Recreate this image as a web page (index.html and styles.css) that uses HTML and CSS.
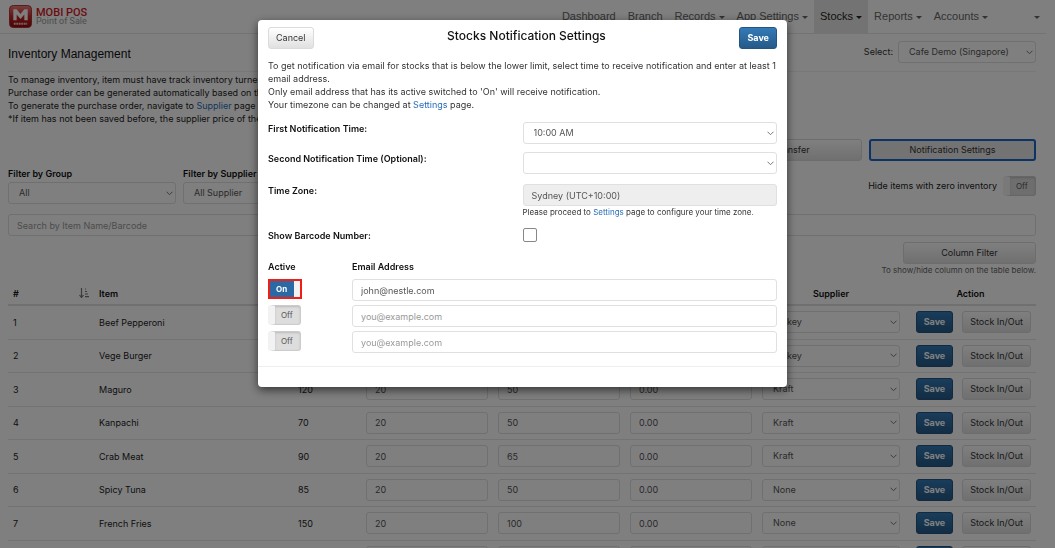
FILE: index.html
```html
<!DOCTYPE html>
<html lang="en">
<head>
<meta charset="utf-8">
<title>Inventory Management</title>
<link rel="stylesheet" href="styles.css">
</head>
<body>
<div class="page">
  <header class="topbar">
    <a class="brand" href="#">
      <svg class="brand-mark" viewBox="0 0 24 24" aria-hidden="true">
        <defs><linearGradient id="red" x1="0" y1="0" x2="0" y2="1"><stop offset="0" stop-color="#f0827c"/><stop offset=".5" stop-color="#cc2424"/><stop offset="1" stop-color="#8f0c10"/></linearGradient></defs>
        <rect x=".5" y=".5" width="23" height="23" rx="4" fill="url(#red)" stroke="#b03034"/>
        <path d="M4.500 16V4.500H8L12 9.500L16 4.500H19.500V16H16V10L12 14.500L8 10V16Z" fill="#fff"/>
        <path d="M5 19.500H19" stroke="#f3c3c0" stroke-width="2" stroke-dasharray="2 .6"/>
      </svg>
      <span class="brand-text"><span class="brand-name">MOBI POS</span><span class="brand-sub">Point of Sale</span></span>
    </a>
    <nav class="nav">
      <a href="#">Dashboard</a>
      <a href="#">Branch</a>
      <a href="#">Records <i class="caret"></i></a>
      <a href="#">App Settings <i class="caret"></i></a>
      <a href="#" class="active">Stocks <i class="caret"></i></a>
      <a href="#">Reports <i class="caret"></i></a>
      <a href="#">Accounts <i class="caret"></i></a>
      <a href="#" class="user" aria-label="User menu"><i class="caret"></i></a>
    </nav>
  </header>

  <main class="content">
    <div class="title-row">
      <h1>Inventory Management</h1>
      <label class="branch">Select: <select class="control"><option>Cafe Demo (Singapore)</option></select></label>
    </div>
    <div class="intro">
      <p>To manage inventory, item must have track inventory turned on.</p>
      <p>Purchase order can be generated automatically based on the lower limit.</p>
      <p>To generate the purchase order, navigate to <a href="#">Supplier</a> page under Stocks.</p>
      <p>*If item has not been saved before, the supplier price of the item is zero.</p>
    </div>
    <div class="actions">
      <button class="btn">Stock Transfer</button>
      <button class="btn focused">Notification Settings</button>
    </div>
    <div class="filters">
      <label class="filter">Filter by Group<select class="control"><option>All</option></select></label>
      <label class="filter">Filter by Supplier<select class="control"><option>All Supplier</option></select></label>
      <div class="zero"><span>Hide items with zero inventory</span><button class="toggle" role="switch" aria-checked="false" aria-label="Hide items with zero inventory">Off</button></div>
    </div>
    <input class="control search" type="text" placeholder="Search by Item Name/Barcode" aria-label="Search">
    <div class="column-filter">
      <button class="btn">Column Filter</button>
      <small>To show/hide column on the table below.</small>
    </div>

    <table class="items">
      <colgroup><col class="c-num"><col class="c-item"><col class="c-qty"><col class="c-field"><col class="c-field"><col class="c-field"><col class="c-supplier"><col class="c-action"></colgroup>
      <thead>
        <tr>
          <th><span class="sort">#
            <svg viewBox="0 0 10 10" aria-hidden="true"><path d="M2.500 0V9M.5 7L2.500 9.500L4.500 7M6 1H7M6 3.500H8M6 6H9M6 8.700H10" fill="none" stroke="#777" stroke-width="1.200"/></svg></span></th>
          <th>Item</th><th>Stock</th><th>Lower Limit</th><th>Upper Limit</th><th>Price</th><th class="center">Supplier</th><th class="center">Action</th>
        </tr>
      </thead>
      <tbody id="rows"></tbody>
    </table>
  </main>
</div>

<div class="backdrop">
  <section class="modal" role="dialog" aria-labelledby="dialog-title">
    <header class="modal-head">
      <button class="btn">Cancel</button>
      <h2 id="dialog-title">Stocks Notification Settings</h2>
      <button class="btn primary">Save</button>
    </header>
    <div class="modal-body">
      <div class="note">
        <p>To get notification via email for stocks that is below the lower limit, select time to receive notification and enter at least 1 email address.</p>
        <p>Only email address that has its active switched to 'On' will receive notification.</p>
        <p>Your timezone can be changed at <a href="#">Settings</a> page.</p>
      </div>
      <div class="form">
        <label for="first">First Notification Time:</label>
        <select id="first" class="control"><option>10:00 AM</option></select>
        <label for="second">Second Notification Time (Optional):</label>
        <select id="second" class="control"><option></option></select>
        <label for="zone">Time Zone:</label>
        <div class="zone"><input id="zone" class="control" type="text" value="Sydney (UTC+10:00)" disabled><small>Please proceed to <a href="#">Settings</a> page to configure your time zone.</small></div>
        <label for="barcode">Show Barcode Number:</label>
        <input id="barcode" class="check" type="checkbox">
      </div>
      <div class="emails">
        <strong>Active</strong><strong>Email Address</strong>
        <button class="toggle on" role="switch" aria-checked="true" aria-label="Active 1">On</button>
        <input class="control" type="email" value="john@nestle.com" aria-label="Email 1">
        <button class="toggle" role="switch" aria-checked="false" aria-label="Active 2">Off</button>
        <input class="control" type="email" placeholder="you@example.com" aria-label="Email 2">
        <button class="toggle" role="switch" aria-checked="false" aria-label="Active 3">Off</button>
        <input class="control" type="email" placeholder="you@example.com" aria-label="Email 3">
      </div>
    </div>
    <footer class="modal-foot"></footer>
  </section>
</div>
<script src="rows.js"></script>
</body>
</html>
```
FILE: styles.css
```css
* { box-sizing: border-box; }
body {
  margin: 0;
  font: 9px/13px Inter, "Liberation Sans", sans-serif;
  color: #333;
  background: #fff;
}
h1, h2, p { margin: 0; }
a { color: #337ab7; text-decoration: none; }
button, input, select { font: inherit; color: inherit; margin: 0; }
.modal a, .intro a { color: #2a6ebb; }

.page { height: 100vh; overflow: hidden; }
.topbar {
  display: flex;
  justify-content: space-between;
  height: 34px;
  margin-right: 9px;
  border-bottom: 1px solid #e7e7e7;
}
.brand { display: flex; align-items: center; gap: 4px; padding-left: 9px; }
.brand-mark { width: 23px; height: 23px; }
.brand-text { display: flex; flex-direction: column; font-family: Roboto, sans-serif; line-height: 9px; }
.brand-name { font-size: 11px; font-weight: 500; color: #d8141c; }
.brand-sub { font-size: 9px; color: #999; }
.nav { display: flex; font: 11px/33px "Liberation Sans", sans-serif; }
.nav a { padding: 0 6px; color: #666; white-space: nowrap; }
.nav .active { background: #e7e7e7; color: #222; }
.nav .user { padding-left: 40px; }
.caret {
  display: inline-block;
  vertical-align: middle;
  border: 3px solid transparent;
  border-top-color: currentColor;
  border-bottom: 0;
}

.content { padding: 7px 19px 0 8px; }
.title-row { display: flex; justify-content: space-between; height: 31px; border-bottom: 1px solid #f0f0f0; }
h1 { font: 400 12px/26px "Liberation Sans", sans-serif; color: #111; }
.branch { display: flex; align-items: flex-start; gap: 5px; line-height: 22px; }
.branch .control { width: 138px; }

.control {
  display: block;
  width: 100%;
  height: 22px;
  padding: 0 8px;
  border: 1px solid #e0e0e0;
  border-radius: 3px;
  background: #fff;
  color: #555;
  line-height: 20px;
  font-weight: 400;
}
select.control {
  appearance: none;
  padding-left: 10px;
  background: #fff url("data:image/svg+xml,%3Csvg xmlns='http://www.w3.org/2000/svg' width='7' height='5'%3E%3Cpath d='M.5 .7L3.500 3.700L6.500 .7' fill='none' stroke='%23777'/%3E%3C/svg%3E") no-repeat right 2px center;
}
.control:disabled { background: #eee; opacity: 1; }
.control::placeholder { color: #999; }

.intro { color: #222; padding-top: 1px; }
.actions { display: flex; justify-content: flex-end; gap: 7px; padding-top: 14px; }
.actions .btn { width: 167px; }
.btn {
  height: 22px;
  padding: 0 7px;
  border: 1px solid #dbdbdb;
  border-radius: 3px;
  background: linear-gradient(#fff, #e0e0e0);
  color: #333;
  line-height: 20px;
  white-space: nowrap;
}
.btn.primary {
  border-color: #245580;
  background: linear-gradient(#337ab7, #265a88);
  color: #fff;
  font-weight: 700;
}
.btn.focused { border: 2px solid #1a66cc; line-height: 18px; background: #e6e6e6; }

.filters { display: flex; gap: 7px; padding-top: 6px; }
.filter { display: grid; gap: 2px; width: 168px; font-weight: 600; color: #111; }
.zero { display: flex; align-items: center; gap: 6px; margin-left: auto; color: #222; }
.toggle {
  width: 33px;
  height: 20px;
  padding: 0 0 0 6px;
  border: 1px solid #ccc;
  border-left: 7px solid #f2f2f2;
  border-radius: 3px;
  background: #ddd;
  box-shadow: inset 0 1px 2px #bbb;
  color: #555;
  font-size: 8px;
  line-height: 16px;
  text-align: left;
}
.toggle.on {
  width: 34px;
  padding: 0 0 0 6px;
  border: 2px solid #f01e14;
  border-radius: 0;
  background: linear-gradient(90deg, #2a69a4 24px, #f2f2f2 24px);
  box-shadow: none;
  color: #fff;
  font-weight: 700;
}
.search { margin-top: 10px; }
.column-filter { display: flex; flex-direction: column; align-items: flex-end; padding-top: 6px; color: #666; }
.column-filter .btn { width: 133px; }
small { font-size: 8px; line-height: 13px; }

.items { width: 100%; margin-top: 5px; table-layout: fixed; border-collapse: collapse; color: #222; }
.c-num { width: 86px; }
.c-qty { width: 68px; }
.c-field { width: 132px; }
.c-supplier { width: 148px; }
.c-action { width: 131px; }
.items th { height: 23px; padding: 0 5px; border-bottom: 2px solid #e0e0e0; text-align: left; font-weight: 600; color: #111; }
.items .center { text-align: center; }
.items td { height: 33px; padding: 0 5px; border-bottom: 1px solid #e7e7e7; }
.items tr:nth-child(odd) td { height: 34px; }
.sort { display: flex; justify-content: space-between; align-items: center; }
.sort svg { width: 10px; height: 10px; }
.row-actions { display: flex; justify-content: flex-end; gap: 9px; }

.backdrop {
  position: fixed;
  inset: 0;
  padding: 20px 10px 0 0;
  background: rgba(0, 0, 0, .5);
}
.modal {
  width: 529px;
  max-width: 100%;
  margin: 0 auto;
  border-radius: 4px;
  background: #fff;
  box-shadow: 0 3px 10px rgba(0, 0, 0, .6);
}
.modal-head { display: flex; justify-content: space-between; align-items: flex-start; padding: 7px 10px 10px; }
h2 { font: 500 12px/17px Inter, sans-serif; color: #111; }
.modal-body { padding: 0 10px 13px; }
.form { display: grid; grid-template-columns: 1fr 1fr; row-gap: 8px; padding-top: 11px; }
.form label { font-weight: 600; color: #111; }
.zone { padding: 2px 0 1px; }
.zone small { display: block; color: #333; }
.form label[for="zone"] { padding-top: 2px; }
.form label[for="barcode"] { padding-top: 1px; }
.check { appearance: none; width: 14px; height: 14px; border: 1px solid #888; border-radius: 2px; background: #fff; }
.emails { display: grid; grid-template-columns: 84px 1fr; row-gap: 4px; padding-top: 16px; }
.emails strong { font-weight: 600; color: #111; line-height: 17px; }
.modal-foot { height: 21px; border-top: 1px solid #eee; }
```
FILE: rows.js
```javascript
const items = [
  ["Beef Pepperoni", 100, 20, 50, "Turkey"],
  ["Vege Burger", 80, 20, 50, "Turkey"],
  ["Maguro", 120, 20, 50, "Kraft"],
  ["Kanpachi", 70, 20, 50, "Kraft"],
  ["Crab Meat", 90, 20, 65, "Kraft"],
  ["Spicy Tuna", 85, 20, 50, "None"],
  ["French Fries", 150, 20, 100, "None"],
  ["Onion Rings", 60, 20, 50, "None"]
];
const field = (label, value) => `<td><input class="control" type="text" aria-label="${label}" value="${value}"></td>`;
document.getElementById("rows").innerHTML = items.map(([name, qty, low, high, supplier], i) => `
  <tr><td>${i + 1}</td><td>${name}</td><td>${qty}</td>
  ${field("Lower limit", low)}${field("Upper limit", high)}${field("Price", "0.00")}
  <td><select class="control" aria-label="Supplier"><option>${supplier}</option></select></td>
  <td><div class="row-actions"><button class="btn primary">Save</button><button class="btn">Stock In/Out</button></div></td></tr>`).join("");
```
